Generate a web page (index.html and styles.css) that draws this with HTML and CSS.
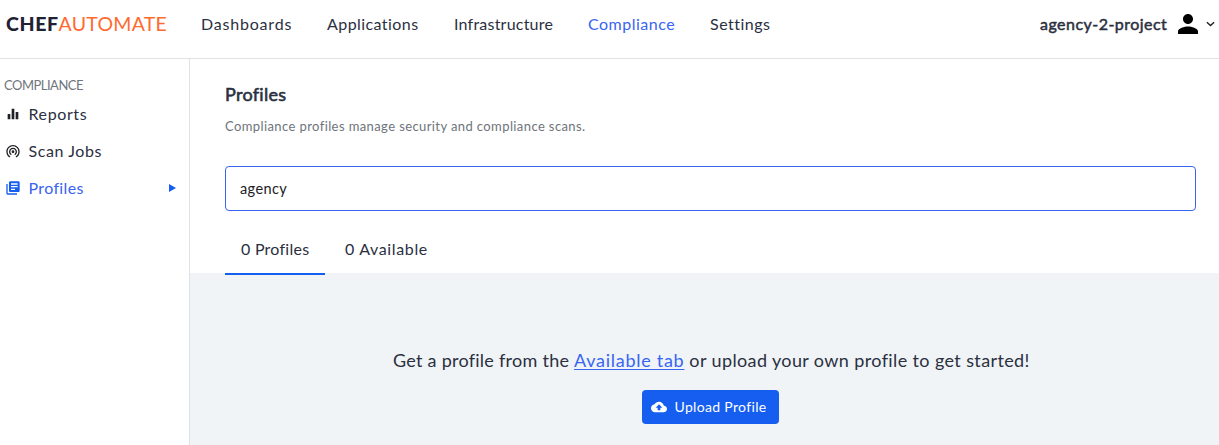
FILE: index.html
```html
<!DOCTYPE html>
<html lang="en">
<head>
<meta charset="utf-8">
<title>Chef Automate</title>
<link rel="stylesheet" href="styles.css">
</head>
<body>
<header class="topbar">
  <div class="logo"><span class="logo-chef">CHEF</span><span class="logo-automate">AUTOMATE</span></div>
  <nav class="nav">
    <a class="dash">Dashboards</a>
    <a class="apps">Applications</a>
    <a class="infra">Infrastructure</a>
    <a class="comp active">Compliance</a>
    <a class="sett">Settings</a>
  </nav>
  <div class="user">
    <span class="project">agency-2-project</span>
    <svg class="person" viewBox="0 0 24 24"><path d="M12 12c2.21 0 4-1.79 4-4s-1.79-4-4-4-4 1.79-4 4 1.79 4 4 4zm0 2c-2.67 0-8 1.34-8 4v2h16v-2c0-2.66-5.33-4-8-4z"/></svg>
    <svg class="chevron" viewBox="0 0 10 6"><path d="M1 1l4 3.6L9 1"/></svg>
  </div>
</header>
<div class="body">
  <aside class="sidebar">
    <h2 class="side-title">COMPLIANCE</h2>
    <a class="side-item"><svg class="icon" viewBox="0 0 24 24"><path d="M10 20h4V4h-4v16zm-6 0h4v-8H4v8zM16 9v11h4V9h-4z"/></svg><span class="reports">Reports</span></a>
    <a class="side-item"><svg class="icon" viewBox="0 0 24 24"><path d="M12 11c-1.1 0-2 .9-2 2s.9 2 2 2 2-.9 2-2-.9-2-2-2zm6 2c0-3.31-2.69-6-6-6s-6 2.69-6 6c0 2.22 1.21 4.15 3 5.19l1-1.74c-1.19-.7-2-1.97-2-3.45 0-2.21 1.79-4 4-4s4 1.79 4 4c0 1.48-.81 2.75-2 3.45l1 1.74c1.79-1.04 3-2.97 3-5.19zM12 3C6.48 3 2 7.48 2 13c0 3.7 2.01 6.92 4.99 8.65l1-1.73C5.61 18.53 4 15.96 4 13c0-4.42 3.58-8 8-8s8 3.58 8 8c0 2.96-1.61 5.53-4 6.92l1 1.73c2.99-1.73 5-4.95 5-8.65 0-5.52-4.48-10-10-10z"/></svg><span class="scans">Scan Jobs</span></a>
    <a class="side-item active"><svg class="icon" viewBox="0 0 24 24"><path d="M4 6H2v14c0 1.1.9 2 2 2h14v-2H4V6zm16-4H8c-1.1 0-2 .9-2 2v12c0 1.1.9 2 2 2h12c1.1 0 2-.9 2-2V4c0-1.1-.9-2-2-2zm-1 9H9V9h10v2zm-4 4H9v-2h6v2zm4-8H9V5h10v2z"/></svg><span class="profiles">Profiles</span><svg class="arrow" viewBox="0 0 7 8"><path d="M0 0l7 4-7 4z"/></svg></a>
  </aside>
  <main class="main">
    <h1 class="title"><span>Profiles</span></h1>
    <p class="subtitle"><span>Compliance profiles manage security and compliance scans.</span></p>
    <div class="search"><span>agency</span></div>
    <div class="tabs">
      <div class="tab selected"><span class="tab-profiles">0 Profiles</span></div>
      <div class="tab"><span class="tab-available">0 Available</span></div>
    </div>
    <section class="empty">
      <p class="message"><span class="lead">Get a profile from the </span><a>Available tab</a> or upload your own profile to get started!</p>
      <div class="upload"><svg class="icon" viewBox="0 0 24 24"><path d="M19.35 10.04C18.67 6.59 15.64 4 12 4 9.11 4 6.6 5.64 5.35 8.04 2.34 8.36 0 10.91 0 14c0 3.31 2.69 6 6 6h13c2.76 0 5-2.24 5-5 0-2.64-2.05-4.78-4.65-4.96zM14 13v4h-4v-4H7l5-5 5 5h-3z"/></svg><span>Upload Profile</span></div>
    </section>
  </main>
</div>
</body>
</html>
```
FILE: styles.css
```css
* { box-sizing: border-box; }
body { margin: 0; width: 1219px; height: 445px; overflow: hidden; background: #fff; color: #2b303f; font: 16px/20px Lato, "Open Sans", sans-serif; display: flex; flex-direction: column; font-kerning: normal; }
h1, h2, p { margin: 0; font-weight: 400; }
svg { display: block; flex: none; fill: currentColor; }
a, span { white-space: nowrap; }
.topbar { flex: none; height: 59px; border-bottom: 1px solid #dfe1e5; display: flex; align-items: flex-start; padding: 0 4px 0 6px; }
.logo { width: 195px; padding-top: 14px; font-size: 19.5px; white-space: nowrap; }
.logo-chef { font-weight: 900; color: #1f2233; letter-spacing: 0.6px; }
.logo-automate { color: #ff6a2e; letter-spacing: 0.25px; }
.nav { display: grid; grid-template-columns: 126px 127px 134px 122px 80px; padding-top: 14px; }
.dash { letter-spacing: 0.8px; }
.apps { letter-spacing: 0.43px; }
.infra { letter-spacing: 0.22px; }
.comp { letter-spacing: 0.5px; }
.sett { letter-spacing: 0.5px; }
.active { color: #3864f2; }
.user { margin-left: auto; display: flex; align-items: flex-start; }
.project { width: 133px; padding-top: 14px; -webkit-text-stroke: 0.5px #2b303f; letter-spacing: 0.47px; }
.person { width: 30px; height: 30px; margin-top: 9px; color: #000; }
.chevron { width: 9px; height: 6px; margin: 21px 0 0 3px; fill: none; stroke: #222; stroke-width: 1.6; }
.body { flex: 1; display: flex; min-height: 0; }
.sidebar { width: 190px; border-right: 1px solid #dfe1e5; padding: 17px 13px 0 4px; }
.side-title { font-size: 13px; line-height: 18px; color: #70757d; letter-spacing: -0.5px; padding-bottom: 1px; }
.side-item { height: 37px; display: flex; align-items: center; }
.icon { width: 16px; height: 16px; }
.side-item .icon { margin: 0 8px 0 0.5px; color: #202124; }
.side-item.active .icon, .side-item .arrow { color: #155eef; }
.side-item span { letter-spacing: 0.6px; }
.side-item .profiles { letter-spacing: 0.35px; }
.side-item .arrow { width: 7px; height: 8px; margin-left: auto; }
.main { flex: 1; display: flex; flex-direction: column; }
.main > * { flex: none; }
.title { padding: 24px 0 0 35px; font-size: 18px; line-height: 22px; letter-spacing: 0.3px; -webkit-text-stroke: 0.6px #2b303f; }
.subtitle { padding: 11px 0 0 35px; font-size: 13px; line-height: 20px; letter-spacing: 0.4px; color: #6e747b; }
.search { margin: 30px 23px 0 35px; height: 45px; border: 1px solid #3864f2; border-radius: 4px; padding: 0 14px; display: flex; align-items: center; font-size: 14.5px; letter-spacing: 0.4px; color: #202124; }
.tabs { height: 62px; padding: 16px 0 0 35px; display: flex; }
.tab { height: 48px; padding: 12px 16px 0; }
.tab.selected { width: 100px; border-bottom: 2px solid #155eef; z-index: 1; }
.tab + .tab { padding-left: 20px; }
.tab-profiles { letter-spacing: 0.25px; }
.tab-available { letter-spacing: 0.65px; }
.main .empty { flex: 1; background: #f0f4f7; display: flex; flex-direction: column; align-items: center; padding: 75px 0 0 11px; }
.message { width: 634px; font-size: 18px; line-height: 24px; white-space: nowrap; letter-spacing: 0.38px; }
.lead { white-space: pre; letter-spacing: 0.26px; }
.message a { color: #3864f2; letter-spacing: 0.72px; text-decoration: underline; text-underline-offset: 2px; text-decoration-thickness: 1px; }
.upload { width: 137px; height: 34px; margin-top: 18px; border-radius: 4px; background: #155eef; color: #fff; display: flex; align-items: center; padding-left: 9px; gap: 8px; font-size: 14px; letter-spacing: 0.33px; }
```
